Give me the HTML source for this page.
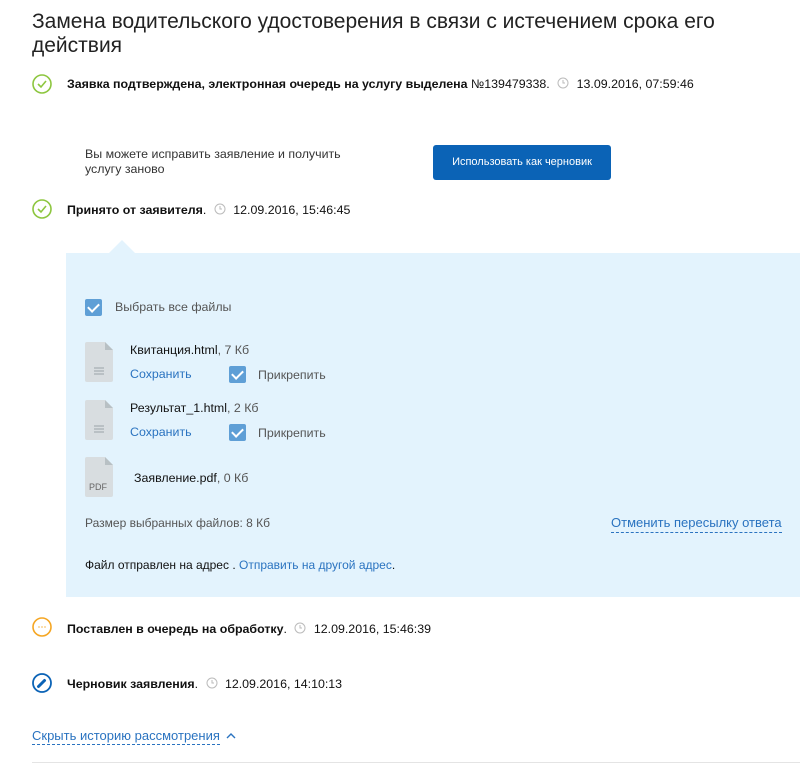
<!DOCTYPE html>
<html><head><meta charset="utf-8"><style>
*{margin:0;padding:0;box-sizing:border-box}
body{width:800px;height:772px;background:#fff;font-family:"Liberation Sans",Arial,sans-serif;color:#111;position:relative;overflow:hidden}
.a{position:absolute;white-space:nowrap}
.t{font-size:12.4px}
.b{font-weight:bold}
.g{color:#555}
.lk{color:#2a73c0}
.dash{border-bottom:1px dashed #2a73c0}
.cb{position:absolute;width:17px;height:17px;background:#5f9fd6;border-radius:2px}
.cb:after{content:"";position:absolute;left:5px;top:2px;width:5px;height:9px;border:solid #fff;border-width:0 2px 2px 0;transform:rotate(45deg)}
.file{position:absolute;width:30px;height:40px}
</style></head><body>
<div class="a" style="left:32px;top:10px;font-size:21px;line-height:24px;color:#222;white-space:normal;width:740px">Замена водительского удостоверения в связи с истечением срока его действия</div>

<svg class="a" style="left:32px;top:74px" width="20" height="20"><circle cx="10" cy="10" r="9" fill="none" stroke="#8dc63f" stroke-width="1.6"/><path d="M6 10l3 3 5-6" fill="none" stroke="#8dc63f" stroke-width="1.6"/></svg>
<div class="a t" style="left:67px;top:77px"><span class="b">Заявка подтверждена, электронная очередь на услугу выделена</span> №139479338. <svg width="12" height="12" style="vertical-align:-1px;margin:0 4px"><circle cx="6" cy="6" r="5" fill="none" stroke="#bbb"/><path d="M6 3v3h2" fill="none" stroke="#bbb"/></svg> 13.09.2016, 07:59:46</div>

<div class="a t" style="left:85px;top:147px;color:#333;white-space:normal;width:270px;line-height:15px">Вы можете исправить заявление и получить услугу заново</div>
<div class="a" style="left:433px;top:145px;width:178px;height:35px;background:#0b63b6;border-radius:3px;color:#fff;font-size:11px;text-align:center;line-height:35px">Использовать как черновик</div>

<svg class="a" style="left:32px;top:199px" width="20" height="20"><circle cx="10" cy="10" r="9" fill="none" stroke="#8dc63f" stroke-width="1.6"/><path d="M6 10l3 3 5-6" fill="none" stroke="#8dc63f" stroke-width="1.6"/></svg>
<div class="a t" style="left:67px;top:203px"><span class="b">Принято от заявителя</span>. <svg width="12" height="12" style="vertical-align:-1px;margin:0 4px"><circle cx="6" cy="6" r="5" fill="none" stroke="#bbb"/><path d="M6 3v3h2" fill="none" stroke="#bbb"/></svg> 12.09.2016, 15:46:45</div>

<div class="a" style="left:66px;top:253px;width:734px;height:344px;background:#e3f3fd"></div>
<div class="a" style="left:108px;top:240px;width:0;height:0;border-left:14px solid transparent;border-right:14px solid transparent;border-bottom:14px solid #e3f3fd"></div>

<div class="cb" style="left:85px;top:299px"></div>
<div class="a t g" style="left:115px;top:300px">Выбрать все файлы</div>

<svg class="file" style="left:85px;top:342px"><path d="M2 0h18l8 8v30a2 2 0 0 1-2 2H2a2 2 0 0 1-2-2V2a2 2 0 0 1 2-2z" fill="#d8dde0"/><path d="M20 0l8 8h-8z" fill="#b8c0c4"/><path d="M9 26h10M9 29h10M9 32h10" stroke="#9aa3a8"/></svg>
<div class="a t" style="left:130px;top:343px">Квитанция.html<span class="g">, 7 Кб</span></div>
<div class="a t lk" style="left:130px;top:367px">Сохранить</div>
<div class="cb" style="left:229px;top:366px"></div>
<div class="a t g" style="left:258px;top:368px">Прикрепить</div>

<svg class="file" style="left:85px;top:400px"><path d="M2 0h18l8 8v30a2 2 0 0 1-2 2H2a2 2 0 0 1-2-2V2a2 2 0 0 1 2-2z" fill="#d8dde0"/><path d="M20 0l8 8h-8z" fill="#b8c0c4"/><path d="M9 26h10M9 29h10M9 32h10" stroke="#9aa3a8"/></svg>
<div class="a t" style="left:130px;top:401px">Результат_1.html<span class="g">, 2 Кб</span></div>
<div class="a t lk" style="left:130px;top:425px">Сохранить</div>
<div class="cb" style="left:229px;top:424px"></div>
<div class="a t g" style="left:258px;top:426px">Прикрепить</div>

<svg class="file" style="left:85px;top:457px"><path d="M2 0h18l8 8v30a2 2 0 0 1-2 2H2a2 2 0 0 1-2-2V2a2 2 0 0 1 2-2z" fill="#d8dde0"/><path d="M20 0l8 8h-8z" fill="#b8c0c4"/><text x="4" y="33" font-size="9" fill="#666" font-family="Liberation Sans">PDF</text></svg>
<div class="a t" style="left:134px;top:471px">Заявление.pdf<span class="g">, 0 Кб</span></div>

<div class="a g" style="left:85px;top:516px;font-size:12px">Размер выбранных файлов: 8 Кб</div>
<div class="a lk dash" style="left:611px;top:515px;padding-bottom:2px;font-size:13px">Отменить пересылку ответа</div>
<div class="a" style="left:85px;top:558px;font-size:12px">Файл отправлен на адрес . <span class="lk">Отправить на другой адрес</span>.</div>

<svg class="a" style="left:32px;top:617px" width="20" height="20"><circle cx="10" cy="10" r="9" fill="none" stroke="#f5a623" stroke-width="1.6"/><path d="M6.5 10h1M9.5 10h1M12.5 10h1" stroke="#f5a623" stroke-width="1.6"/></svg>
<div class="a t" style="left:67px;top:622px"><span class="b">Поставлен в очередь на обработку</span>. <svg width="12" height="12" style="vertical-align:-1px;margin:0 4px"><circle cx="6" cy="6" r="5" fill="none" stroke="#bbb"/><path d="M6 3v3h2" fill="none" stroke="#bbb"/></svg> 12.09.2016, 15:46:39</div>

<svg class="a" style="left:32px;top:673px" width="20" height="20"><circle cx="10" cy="10" r="9" fill="none" stroke="#0b63b6" stroke-width="1.8"/><path d="M6.5 13.5l6-6" stroke="#0b63b6" stroke-width="3" stroke-linecap="round"/></svg>
<div class="a t" style="left:67px;top:677px"><span class="b">Черновик заявления</span>. <svg width="12" height="12" style="vertical-align:-1px;margin:0 4px"><circle cx="6" cy="6" r="5" fill="none" stroke="#bbb"/><path d="M6 3v3h2" fill="none" stroke="#bbb"/></svg> 12.09.2016, 14:10:13</div>

<div class="a lk dash" style="left:32px;top:728px;padding-bottom:1px;font-size:13px">Скрыть историю рассмотрения</div>
<svg class="a" style="left:226px;top:732px" width="10" height="8"><path d="M1 6l4-4 4 4" fill="none" stroke="#2a73c0" stroke-width="1.4"/></svg>
<div class="a" style="left:32px;top:762px;width:768px;height:1px;background:#e4e4e4"></div>
</body></html>
